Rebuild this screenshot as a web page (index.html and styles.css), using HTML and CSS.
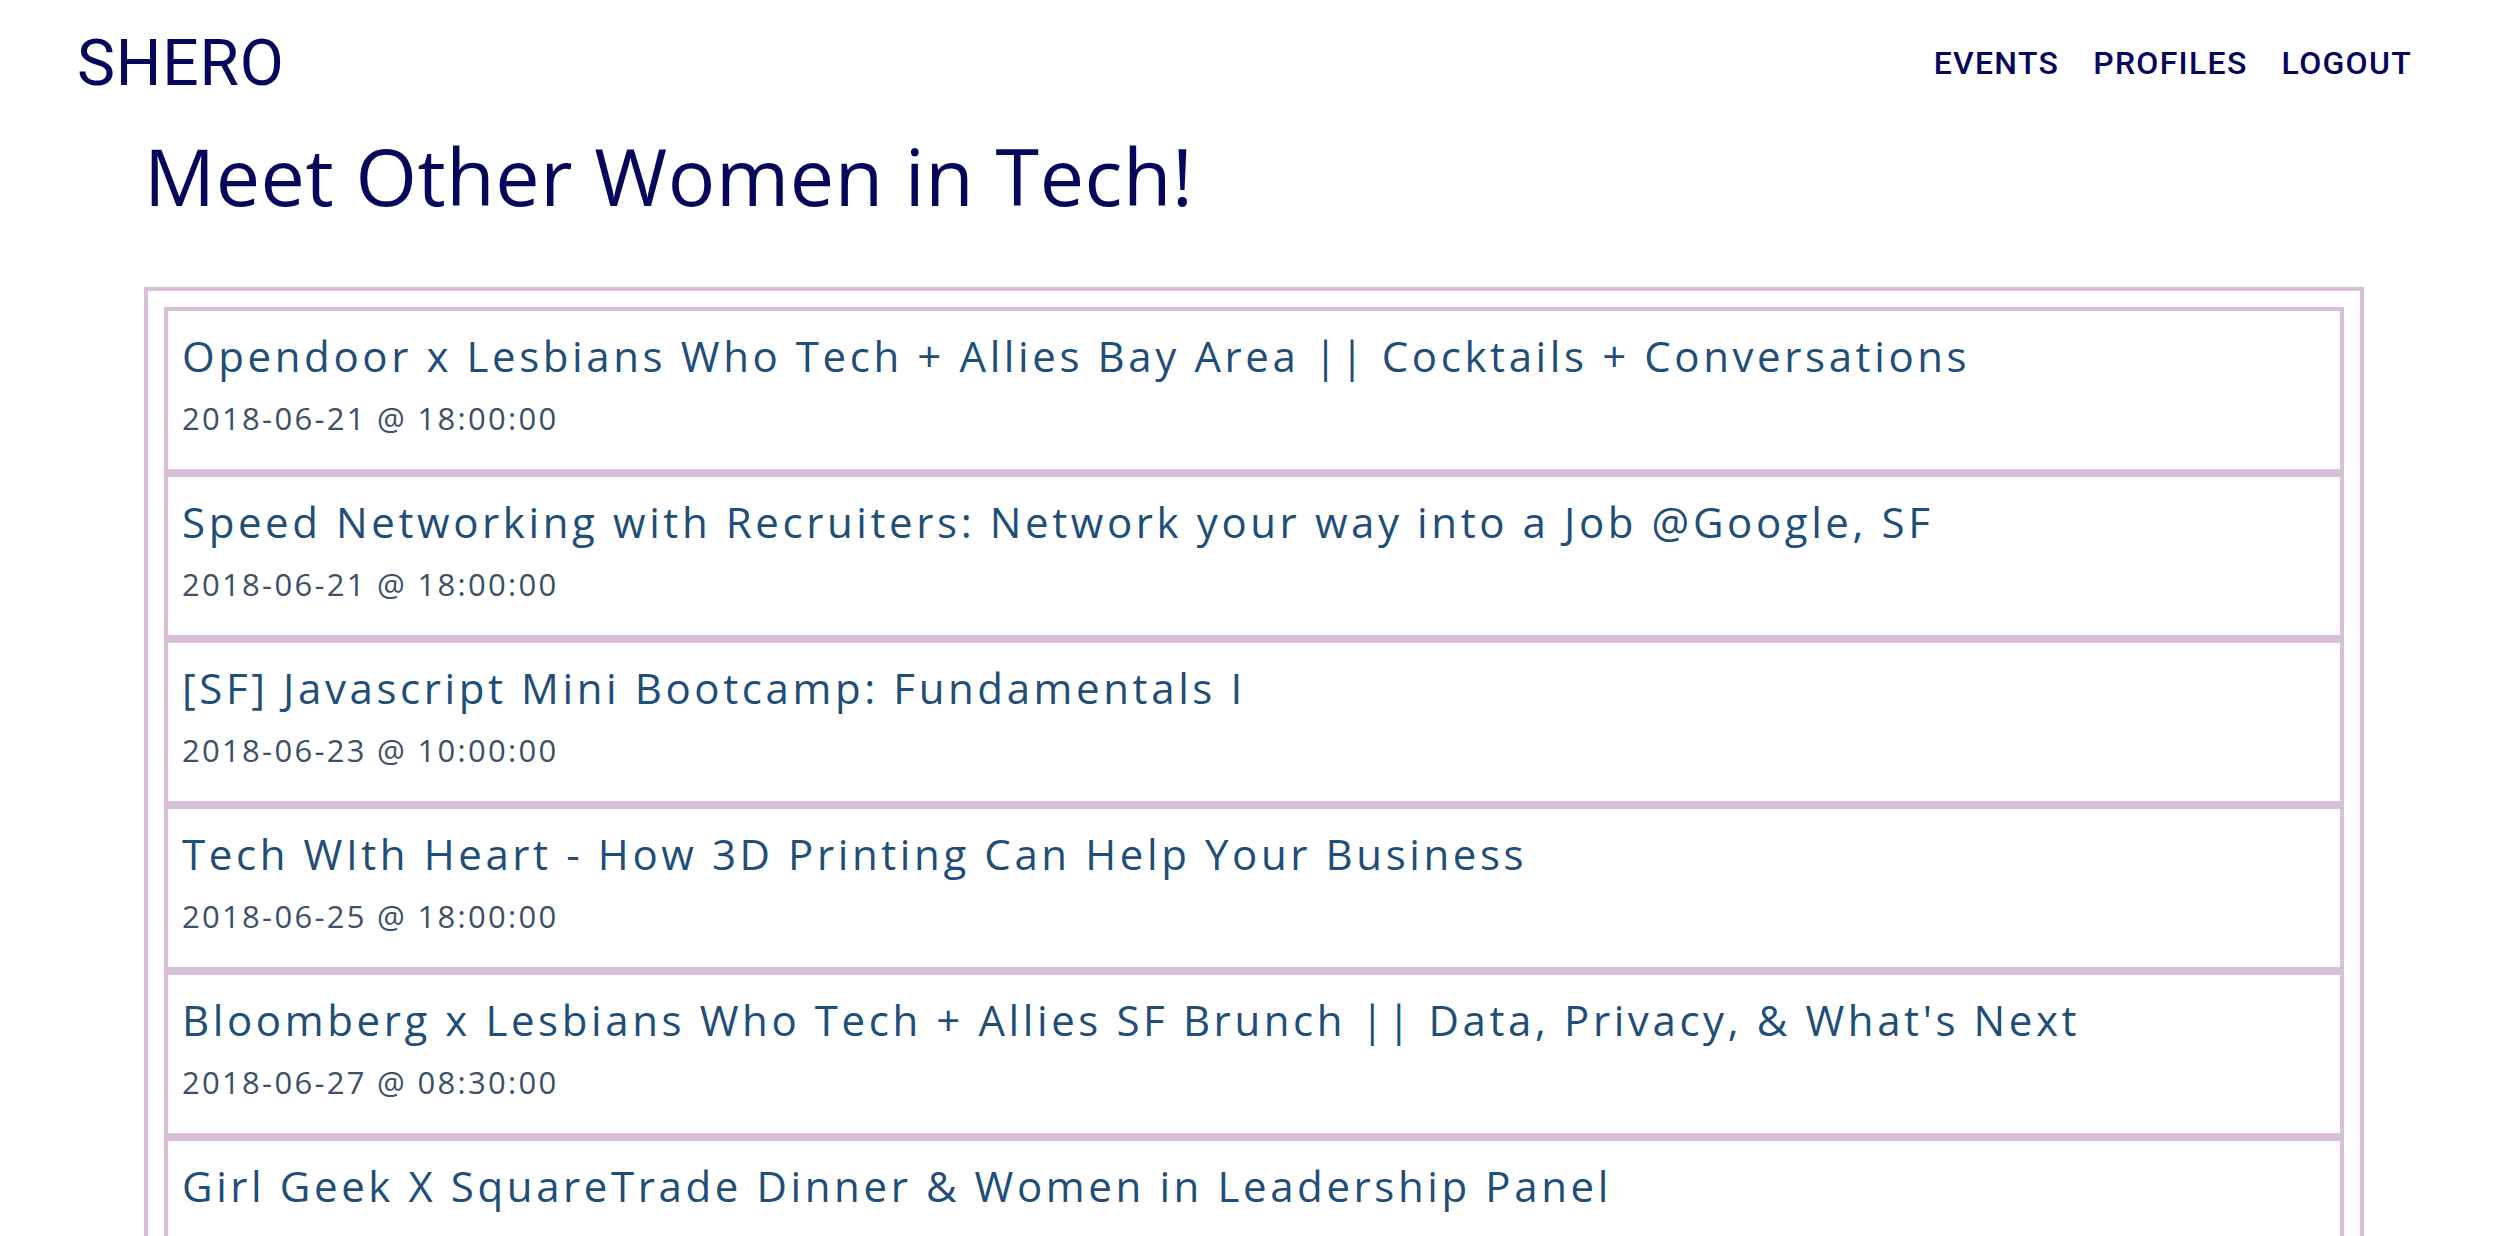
FILE: index.html
```html
<!DOCTYPE html>
<html lang="en">
<head>
<meta charset="utf-8">
<title>SHERO - Events</title>
<link rel="stylesheet" href="styles.css">
</head>
<body>
<header class="topbar">
  <a class="brand" href="#">SHERO</a>
  <nav class="nav">
    <a class="nav-link" href="#">EVENTS</a>
    <a class="nav-link" href="#">PROFILES</a>
    <a class="nav-link" href="#">LOGOUT</a>
  </nav>
</header>
<main class="page">
  <h1 class="page-title">Meet Other Women in Tech!</h1>
  <section class="event-list">
    <article class="event-card">
      <h2 class="event-title">Opendoor x Lesbians Who Tech + Allies Bay Area || Cocktails + Conversations</h2>
      <p class="event-date">2018-06-21 @ 18:00:00</p>
    </article>
    <article class="event-card">
      <h2 class="event-title">Speed Networking with Recruiters: Network your way into a Job @Google, SF</h2>
      <p class="event-date">2018-06-21 @ 18:00:00</p>
    </article>
    <article class="event-card">
      <h2 class="event-title">[SF] Javascript Mini Bootcamp: Fundamentals I</h2>
      <p class="event-date">2018-06-23 @ 10:00:00</p>
    </article>
    <article class="event-card">
      <h2 class="event-title">Tech WIth Heart - How 3D Printing Can Help Your Business</h2>
      <p class="event-date">2018-06-25 @ 18:00:00</p>
    </article>
    <article class="event-card">
      <h2 class="event-title">Bloomberg x Lesbians Who Tech + Allies SF Brunch || Data, Privacy, &amp; What's Next</h2>
      <p class="event-date">2018-06-27 @ 08:30:00</p>
    </article>
    <article class="event-card">
      <h2 class="event-title">Girl Geek X SquareTrade Dinner &amp; Women in Leadership Panel</h2>
      <p class="event-date">2018-06-27 @ 18:00:00</p>
    </article>
  </section>
</main>
</body>
</html>
```

FILE: styles.css
```css
html, body {
  margin: 0;
  padding: 0;
  background: #ffffff;
}

body {
  font-family: "Open Sans", "Lato", sans-serif;
}

.topbar {
  display: flex;
  align-items: center;
  justify-content: space-between;
  padding: 32px 82px 0 77px;
}

.brand {
  font-family: "Roboto", "Liberation Sans", sans-serif;
  font-size: 64px;
  line-height: 64px;
  font-weight: 400;
  letter-spacing: 0.8px;
  color: #05065c;
  text-decoration: none;
}

.nav {
  display: flex;
  gap: 34px;
  margin-bottom: 2px;
}

.nav-link {
  font-family: "Roboto", "Liberation Sans", sans-serif;
  font-size: 32px;
  line-height: 32px;
  font-weight: 500;
  letter-spacing: 1.3px;
  color: #05065c;
  text-decoration: none;
}

.page {
  padding: 0 130px 0 144px;
}

.page-title {
  margin: 40px 0 72px 0;
  font-size: 79px;
  line-height: 79px;
  font-weight: 400;
  letter-spacing: 0.6px;
  color: #05065c;
}

.event-list {
  display: flex;
  flex-direction: column;
  border: 4px solid #d8bfd8;
  padding: 16px;
}

.event-card {
  border: 4px solid #d8bfd8;
  padding: 20px 14px 32px 14px;
}

.event-title {
  margin: 0;
  font-size: 42px;
  line-height: 50px;
  font-weight: 400;
  letter-spacing: 3.6px;
  color: #1f4e79;
}

.event-date {
  margin: 18px 0 0 0;
  font-size: 31px;
  line-height: 38px;
  font-weight: 400;
  letter-spacing: 2.3px;
  color: #3d5069;
}
```
